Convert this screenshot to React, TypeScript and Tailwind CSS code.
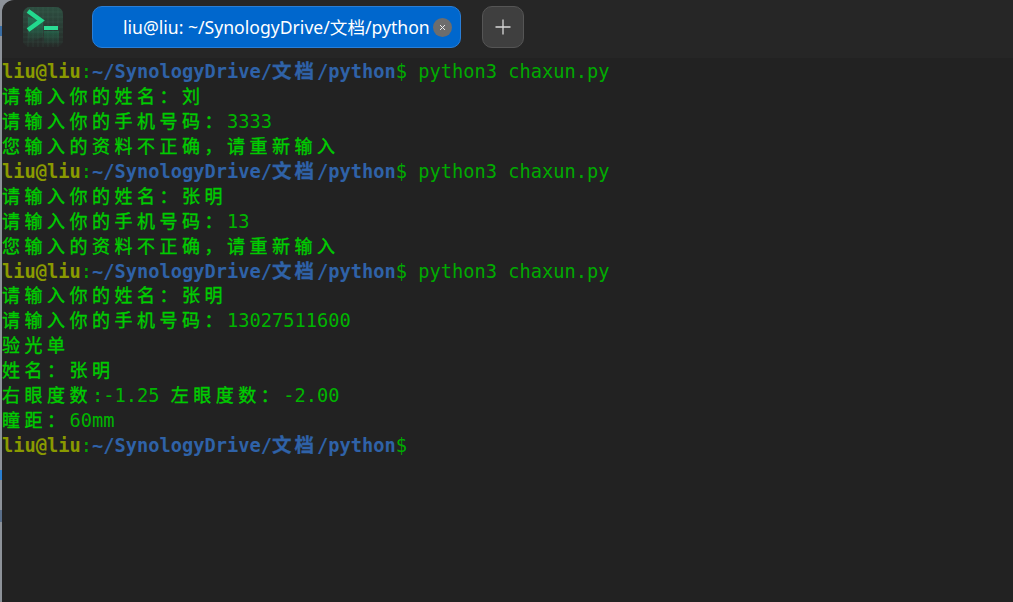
const mono = { fontFamily: '"DejaVu Sans Mono","Noto Sans CJK SC",monospace' };

function Txt({ t, cls = "", cjk = "" }: { t: string; cls?: string; cjk?: string }) {
  const parts = t.split(/([\u3000-\u9fff\uff00-\uffef]+)/).filter(Boolean);
  return (
    <span className={cls}>
      {parts.map((p, i) =>
        /[\u3000-\u9fff\uff00-\uffef]/.test(p) ? (
          <span key={i} className={cjk}>{p}</span>
        ) : (
          <span key={i}>{p}</span>
        )
      )}
    </span>
  );
}

function Prompt({ cmd }: { cmd?: string }) {
  return (
    <div className="h-[24.95px] whitespace-pre">
      <Txt t="liu@liu" cls="font-bold text-[#8a9a00]" />
      <span className="text-[#00a800]">:</span>
      <Txt
        t="~/SynologyDrive/文档/python"
        cls="font-bold text-[#2f62a8]"
        cjk="font-['Noto_Sans_CJK_SC'] text-[19.5px] leading-[20px] tracking-[3px] [-webkit-text-stroke:0.3px_#2f62a8]"
      />
      <span className="text-[#00aa00]">$ {cmd}</span>
    </div>
  );
}

function Line({ t }: { t: string }) {
  return (
    <div className="h-[24.95px] whitespace-pre text-[#00b400]">
      <Txt
        t={t}
        cjk="font-['Noto_Sans_CJK_SC'] text-[18px] leading-[20px] tracking-[4.5px] text-[#00cc00] [-webkit-text-stroke:0.35px_#00cc00]"
      />
    </div>
  );
}

function Logo() {
  return (
    <svg width="40" height="40" viewBox="0 0 40 40" className="shrink-0">
      <defs>
        <linearGradient id="bg" x1="0" y1="0" x2="0" y2="1">
          <stop offset="0" stopColor="#2d4f41" />
          <stop offset="1" stopColor="#262a28" />
        </linearGradient>
        <linearGradient id="sh" x1="0" y1="0" x2="0" y2="1">
          <stop offset="0" stopColor="#1c8f63" />
          <stop offset="1" stopColor="#1c8f63" stopOpacity="0" />
        </linearGradient>
      </defs>
      <rect width="40" height="40" rx="7" fill="url(#bg)" />
      <g stroke="#5f8a78" strokeOpacity="0.2" strokeWidth="0.7">
        {[5, 10, 15, 20, 25, 30, 35].map((v) => (
          <g key={v}>
            <line x1={v} y1="0" x2={v} y2="40" />
            <line x1="0" y1={v} x2="40" y2={v} />
          </g>
        ))}
      </g>
      <path d="M5 10 L20 14 L20 30 L5 36Z" fill="url(#sh)" opacity="0.6" />
      <path d="M21 24 H36 V38 H21Z" fill="url(#sh)" opacity="0.4" />
      <path d="M5 4 L18 13.5 L5 23" fill="none" stroke="#22d98e" strokeWidth="4.5" />
      <rect x="21" y="19" width="14" height="4" fill="#2bdc94" />
    </svg>
  );
}

export default function App() {
  return (
    <div className="w-[1013px] h-[602px] overflow-hidden relative bg-[#8d9299]">
      <div className="absolute left-0 top-[26px] w-[2px] h-[10px] bg-[#3a6ea5]" />
      <div className="absolute left-0 top-[470px] w-[2px] h-[10px] bg-[#2b7fd0]" />
      <div className="absolute left-0 top-[510px] w-[2px] h-[12px] bg-[#5a6f8a]" />
      <div className="absolute left-[2px] top-0 w-[1011px] h-[602px] rounded-tl-[12px] bg-[#262626] flex flex-col overflow-hidden">
        <div className="h-[58px] shrink-0 flex items-start">
          <div className="ml-[21px] mt-[7px]">
            <Logo />
          </div>
          <div className="ml-[29px] mt-[6px] w-[369px] h-[42px] rounded-[10px] bg-[#0067cd] border border-[#2a7ed6] flex items-center relative">
            <span className="ml-[30px] text-white text-[17.6px] whitespace-nowrap font-['Noto_Sans','Noto_Sans_CJK_SC',sans-serif]">
              liu@liu: ~/SynologyDrive/文档/python
            </span>
            <span className="absolute left-[340px] top-[11px] w-[19px] h-[19px] rounded-full bg-[#6d6d6d] flex items-center justify-center">
              <svg width="9" height="9" viewBox="0 0 9 9">
                <path d="M2 2L7 7M7 2L2 7" stroke="#e8e8e8" strokeWidth="1" />
              </svg>
            </span>
          </div>
          <div className="ml-[21px] mt-[6px] w-[42px] h-[42px] rounded-[10px] bg-[#3f3f3f] border border-[#555] flex items-center justify-center">
            <svg width="16" height="16" viewBox="0 0 16 16">
              <path d="M8 0.5V15.5M0.5 8H15.5" stroke="#d8d8d8" strokeWidth="1.3" />
            </svg>
          </div>
        </div>
        <div className="flex-1 bg-[#222222] text-[18.7px] leading-[25px] pt-[1px]" style={mono}>
          <Prompt cmd="python3 chaxun.py" />
          <Line t="请输入你的姓名：刘" />
          <Line t="请输入你的手机号码：3333" />
          <Line t="您输入的资料不正确，请重新输入" />
          <Prompt cmd="python3 chaxun.py" />
          <Line t="请输入你的姓名：张明" />
          <Line t="请输入你的手机号码：13" />
          <Line t="您输入的资料不正确，请重新输入" />
          <Prompt cmd="python3 chaxun.py" />
          <Line t="请输入你的姓名：张明" />
          <Line t="请输入你的手机号码：13027511600" />
          <Line t="验光单" />
          <Line t="姓名：张明" />
          <Line t="右眼度数:-1.25 左眼度数：-2.00" />
          <Line t="瞳距：60mm" />
          <Prompt />
        </div>
      </div>
    </div>
  );
}
